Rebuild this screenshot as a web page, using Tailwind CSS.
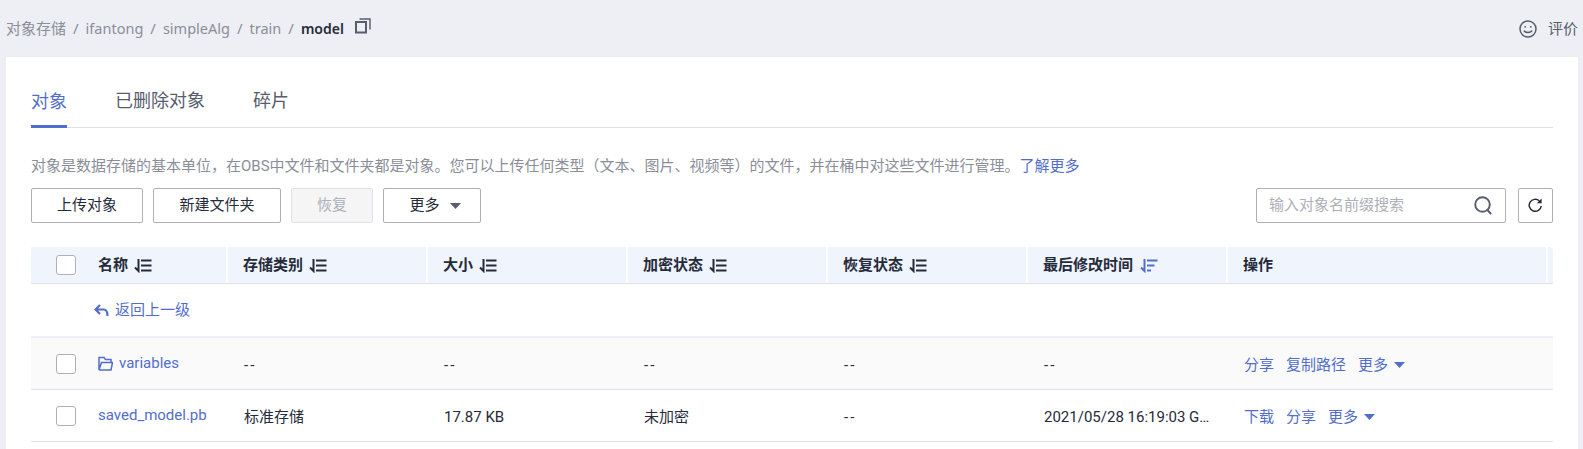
<!DOCTYPE html>
<html lang="zh-CN">
<head>
  <meta charset="utf-8" />
  <title>对象存储</title>
  <script src="https://cdn.jsdelivr.net/npm/@tailwindcss/browser@4"></script>
</head>
<body class="h-[449px] overflow-hidden bg-[#eeeff4] text-[#252b3a] [font-family:'Roboto','Noto_Sans_CJK_SC',sans-serif]">
  <!-- Breadcrumb -->
  <header class="h-[57px] pl-[6px] pr-[5px] flex items-center justify-between text-[15px] text-[#8a8e99] [font-family:'Noto_Sans','Noto_Sans_CJK_SC',sans-serif]">
    <div class="flex items-center">
      <span>对象存储</span><span class="mx-[7px]">/</span>
      <span class="text-[14.5px]">ifantong</span><span class="mx-[7px]">/</span>
      <span class="text-[14.5px]">simpleAlg</span><span class="mx-[7px]">/</span>
      <span class="text-[14.5px]">train</span><span class="mx-[7px]">/</span>
      <span class="font-semibold text-[14px] text-[#252b3a]">model</span>
      <svg class="ml-[11px] mb-[5px] text-[#575d6c]" width="16" height="16" viewBox="0 0 16 16" fill="none" stroke="currentColor">
        <rect x="1" y="4" width="10" height="10.5" stroke-width="2" />
        <path d="M4.5 1H15V11.5" stroke-width="1.4" />
      </svg>
    </div>
    <div class="flex items-center gap-[11px] text-[15px] text-[#575d6c]">
      <svg width="18" height="18" viewBox="0 0 18 18" fill="none" stroke="currentColor" stroke-width="1.5">
        <circle cx="9" cy="9" r="8" />
        <path d="M5 10.5c1 2.6 7 2.6 8 0" />
        <circle cx="6.2" cy="6.8" r="0.9" fill="currentColor" stroke="none" />
        <circle cx="11.8" cy="6.8" r="0.9" fill="currentColor" stroke="none" />
      </svg>
      <span>评价</span>
    </div>
  </header>

  <!-- Card -->
  <main class="ml-[6px] mr-[5px] h-[392px] bg-white px-[25px]">
    <!-- Tabs -->
    <nav class="h-[71px] flex items-end gap-[48px] border-b border-[#dfe1e6] text-[18px] leading-[28px] text-[#575d6c]">
      <a class="h-[40px] w-[36px] border-b-[3px] border-[#526ecc] -mb-px text-[#526ecc] whitespace-nowrap">对象</a>
      <a class="h-[40px] w-[90px] whitespace-nowrap">已删除对象</a>
      <a class="h-[40px] whitespace-nowrap">碎片</a>
    </nav>

    <p class="mt-[28px] h-[20px] leading-[20px] text-[15px] text-[#8a8e99] whitespace-nowrap">对象是数据存储的基本单位，在OBS中文件和文件夹都是对象。您可以上传任何类型（文本、图片、视频等）的文件，并在桶中对这些文件进行管理。<a class="text-[#526ecc]">了解更多</a></p>

    <!-- Toolbar -->
    <div class="mt-[12px] flex justify-between">
      <div class="flex gap-[10px] text-[15px]">
        <button class="w-[112px] h-[35px] border border-[#adb0b8] rounded-[2px]">上传对象</button>
        <button class="w-[128px] h-[35px] border border-[#adb0b8] rounded-[2px]">新建文件夹</button>
        <button class="w-[82px] h-[35px] border border-[#dfe1e6] bg-[#f5f5f6] text-[#adb0b8] rounded-[2px]">恢复</button>
        <button class="w-[98px] h-[35px] pl-[6px] border border-[#adb0b8] rounded-[2px] flex items-center justify-center gap-[10px]">更多
          <svg width="11" height="6" viewBox="0 0 11 6" class="text-[#575d6c]"><path d="M0 0H11L5.5 6Z" fill="currentColor" /></svg>
        </button>
      </div>
      <div class="flex gap-[12px]">
        <div class="w-[250px] h-[35px] border border-[#adb0b8] rounded-[2px] flex items-center justify-between pl-[12px] pr-[12px] text-[15px] text-[#adb0b8]">
          <span>输入对象名前缀搜索</span>
          <svg width="19" height="19" viewBox="0 0 19 19" fill="none" stroke="#575d6c" stroke-width="1.9">
            <circle cx="8.5" cy="8.5" r="7.3" />
            <path d="M13.5 14l3.5 4" />
          </svg>
        </div>
        <button class="w-[35px] h-[35px] border border-[#adb0b8] rounded-[2px] flex items-center justify-center">
          <svg width="15" height="15" viewBox="0 0 15 15" fill="none" stroke="#252b3a" stroke-width="1.5">
            <path d="M13.2 8a6 6 0 1 1-1.8-5" />
            <path d="M13.6 0.5V5.2H8.9Z" fill="#252b3a" stroke="none" />
          </svg>
        </button>
      </div>
    </div>

    <!-- Table -->
    <section class="mt-[24px] text-[15px]">
      <div class="h-[37px] flex bg-[#f0f4fc] border-b border-[#dfe1e6] font-bold rounded-tr-[4px]">
        <div class="w-[197px] flex items-center border-r-2 border-white">
          <span class="ml-[25px] w-[20px] h-[20px] border border-[#adb0b8] rounded-[3px] bg-white"></span>
          <span class="ml-[22px]">名称</span>
          <svg class="ml-[5px]" width="19" height="15" viewBox="0 0 19 15" fill="none" stroke="#252b3a" stroke-width="2"><path d="M5.5 1V13L2 9.5M8 2.5H18.5M8 7.5H18.5M8 12.5H18.5" /></svg>
        </div>
        <div class="w-[200px] pl-[15px] flex items-center border-r-2 border-white">存储类别
          <svg class="ml-[5px]" width="19" height="15" viewBox="0 0 19 15" fill="none" stroke="#252b3a" stroke-width="2"><path d="M5.5 1V13L2 9.5M8 2.5H18.5M8 7.5H18.5M8 12.5H18.5" /></svg>
        </div>
        <div class="w-[200px] pl-[15px] flex items-center border-r-2 border-white">大小
          <svg class="ml-[5px]" width="19" height="15" viewBox="0 0 19 15" fill="none" stroke="#252b3a" stroke-width="2"><path d="M5.5 1V13L2 9.5M8 2.5H18.5M8 7.5H18.5M8 12.5H18.5" /></svg>
        </div>
        <div class="w-[200px] pl-[15px] flex items-center border-r-2 border-white">加密状态
          <svg class="ml-[5px]" width="19" height="15" viewBox="0 0 19 15" fill="none" stroke="#252b3a" stroke-width="2"><path d="M5.5 1V13L2 9.5M8 2.5H18.5M8 7.5H18.5M8 12.5H18.5" /></svg>
        </div>
        <div class="w-[200px] pl-[15px] flex items-center border-r-2 border-white">恢复状态
          <svg class="ml-[5px]" width="19" height="15" viewBox="0 0 19 15" fill="none" stroke="#252b3a" stroke-width="2"><path d="M5.5 1V13L2 9.5M8 2.5H18.5M8 7.5H18.5M8 12.5H18.5" /></svg>
        </div>
        <div class="w-[200px] pl-[15px] flex items-center border-r-2 border-white">最后修改时间
          <svg class="ml-[6px]" width="19" height="15" viewBox="0 0 19 15" fill="none" stroke="#526ecc" stroke-width="2"><path d="M5.5 1V13L2 9.5M8 2.5H18.5M8 7.5H15.5M8 12.5H12" /></svg>
        </div>
        <div class="w-[320px] pl-[15px] flex items-center border-r-2 border-white">操作</div>
      </div>

      <div class="h-[54px] flex items-center border-b-2 border-[#eeeff4] text-[#526ecc]">
        <svg class="ml-[63px] mr-[6px]" width="15" height="13" viewBox="0 0 15 13" fill="none" stroke="currentColor" stroke-width="2.2"><path d="M6 1L1.5 5.5L6 10M2 5.5H9.5C12 5.5 13.5 7.5 13.5 12" /></svg>
        <span>返回上一级</span>
      </div>

      <div class="h-[52px] flex items-center bg-[#fafafa] border-b border-[#dfe1e6]">
        <div class="w-[197px] flex items-center">
          <span class="ml-[25px] w-[20px] h-[20px] border border-[#adb0b8] rounded-[3px] bg-white"></span>
          <svg class="ml-[22px]" width="15" height="15" viewBox="0 0 15 15" fill="none" stroke="#526ecc" stroke-width="1.5"><path d="M1 14V1.5H6L7.5 3.5H13V6.5M1 14H13L14.5 6.5H3.5L1 14" /></svg>
          <span class="ml-[6px] text-[#526ecc]">variables</span>
        </div>
        <div class="w-[200px] pl-[16px] pt-[3px] tracking-[2px]">--</div>
        <div class="w-[200px] pl-[16px] pt-[3px] tracking-[2px]">--</div>
        <div class="w-[200px] pl-[16px] pt-[3px] tracking-[2px]">--</div>
        <div class="w-[200px] pl-[16px] pt-[3px] tracking-[2px]">--</div>
        <div class="w-[200px] pl-[16px] pt-[3px] tracking-[2px]">--</div>
        <div class="pl-[16px] pt-[3px] flex items-center gap-[12px] text-[#526ecc]">
          <span>分享</span><span>复制路径</span>
          <span class="flex items-center gap-[6px]">更多<svg width="11" height="6" viewBox="0 0 11 6"><path d="M0 0H11L5.5 6Z" fill="currentColor" /></svg></span>
        </div>
      </div>

      <div class="h-[52px] flex items-center border-b border-[#dfe1e6]">
        <div class="w-[197px] flex items-center">
          <span class="ml-[25px] w-[20px] h-[20px] border border-[#adb0b8] rounded-[3px] bg-white"></span>
          <span class="ml-[22px] text-[#526ecc]">saved_model.pb</span>
        </div>
        <div class="w-[200px] pl-[16px] pt-[3px]">标准存储</div>
        <div class="w-[200px] pl-[16px] pt-[3px]">17.87 KB</div>
        <div class="w-[200px] pl-[16px] pt-[3px]">未加密</div>
        <div class="w-[200px] pl-[16px] pt-[3px] tracking-[2px]">--</div>
        <div class="w-[200px] pl-[16px] pr-[16px] pt-[3px]"><span class="block truncate">2021/05/28 16:19:03 GMT+08:00</span></div>
        <div class="pl-[16px] pt-[3px] flex items-center gap-[12px] text-[#526ecc]">
          <span>下载</span><span>分享</span>
          <span class="flex items-center gap-[6px]">更多<svg width="11" height="6" viewBox="0 0 11 6"><path d="M0 0H11L5.5 6Z" fill="currentColor" /></svg></span>
        </div>
      </div>
    </section>
  </main>
</body>
</html>
